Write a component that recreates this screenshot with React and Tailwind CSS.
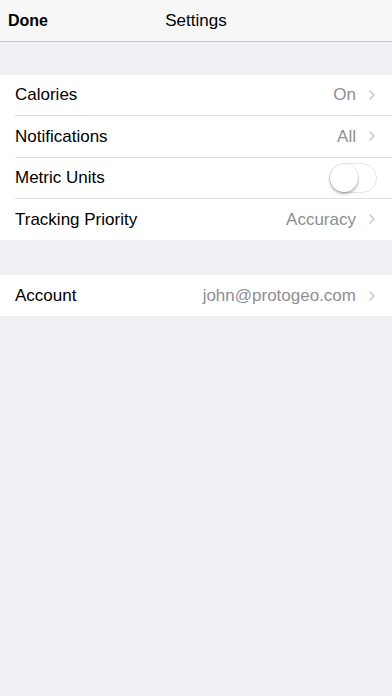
import { ChevronRight } from "lucide-react";

const font = { fontFamily: '"Liberation Sans", Arial, sans-serif' };

function Row({ label, value, last, children }) {
  return (
    <div className="flex h-[41.25px] items-center bg-white pl-[15px]">
      <div
        className={`flex h-full flex-1 items-center pr-[12px] ${
          last ? "" : "border-b border-[#e0e0e4]"
        }`}
      >
        <span className="flex-1 text-[17px] text-black">{label}</span>
        {children ? (
          children
        ) : (
          <>
            <span className="text-[17px] text-[#8e8e93]">{value}</span>
            <ChevronRight className="ml-[8px] h-[16px] w-[16px] text-[#c7c7cc]" strokeWidth={2.2} />
          </>
        )}
      </div>
    </div>
  );
}

function Toggle() {
  return (
    <div className="relative mr-[3px] h-[30px] w-[48px] rounded-full border border-[#e5e5ea] bg-white">
      <div className="absolute left-0 top-0 h-[28px] w-[28px] rounded-full bg-white shadow-[0_2px_3px_rgba(0,0,0,0.3),0_0_0_0.5px_rgba(0,0,0,0.08)]" />
    </div>
  );
}

export default function App() {
  return (
    <div className="min-h-[696px] w-full bg-[#efeff4]" style={font}>
      <div className="relative flex h-[42px] items-center border-b border-[#c8c7cc] bg-[#f7f7f7] pt-[1px]">
        <span className="pl-[8px] text-[16px] font-bold text-black">Done</span>
        <span className="absolute left-0 right-0 text-center text-[17px] text-black pointer-events-none">
          Settings
        </span>
      </div>

      <div className="mt-[33px]">
        <Row label="Calories" value="On" />
        <Row label="Notifications" value="All" />
        <Row label="Metric Units">
          <Toggle />
        </Row>
        <Row label="Tracking Priority" value="Accuracy" last />
      </div>

      <div className="mt-[35px]">
        <Row label="Account" value="john@protogeo.com" last />
      </div>
    </div>
  );
}
